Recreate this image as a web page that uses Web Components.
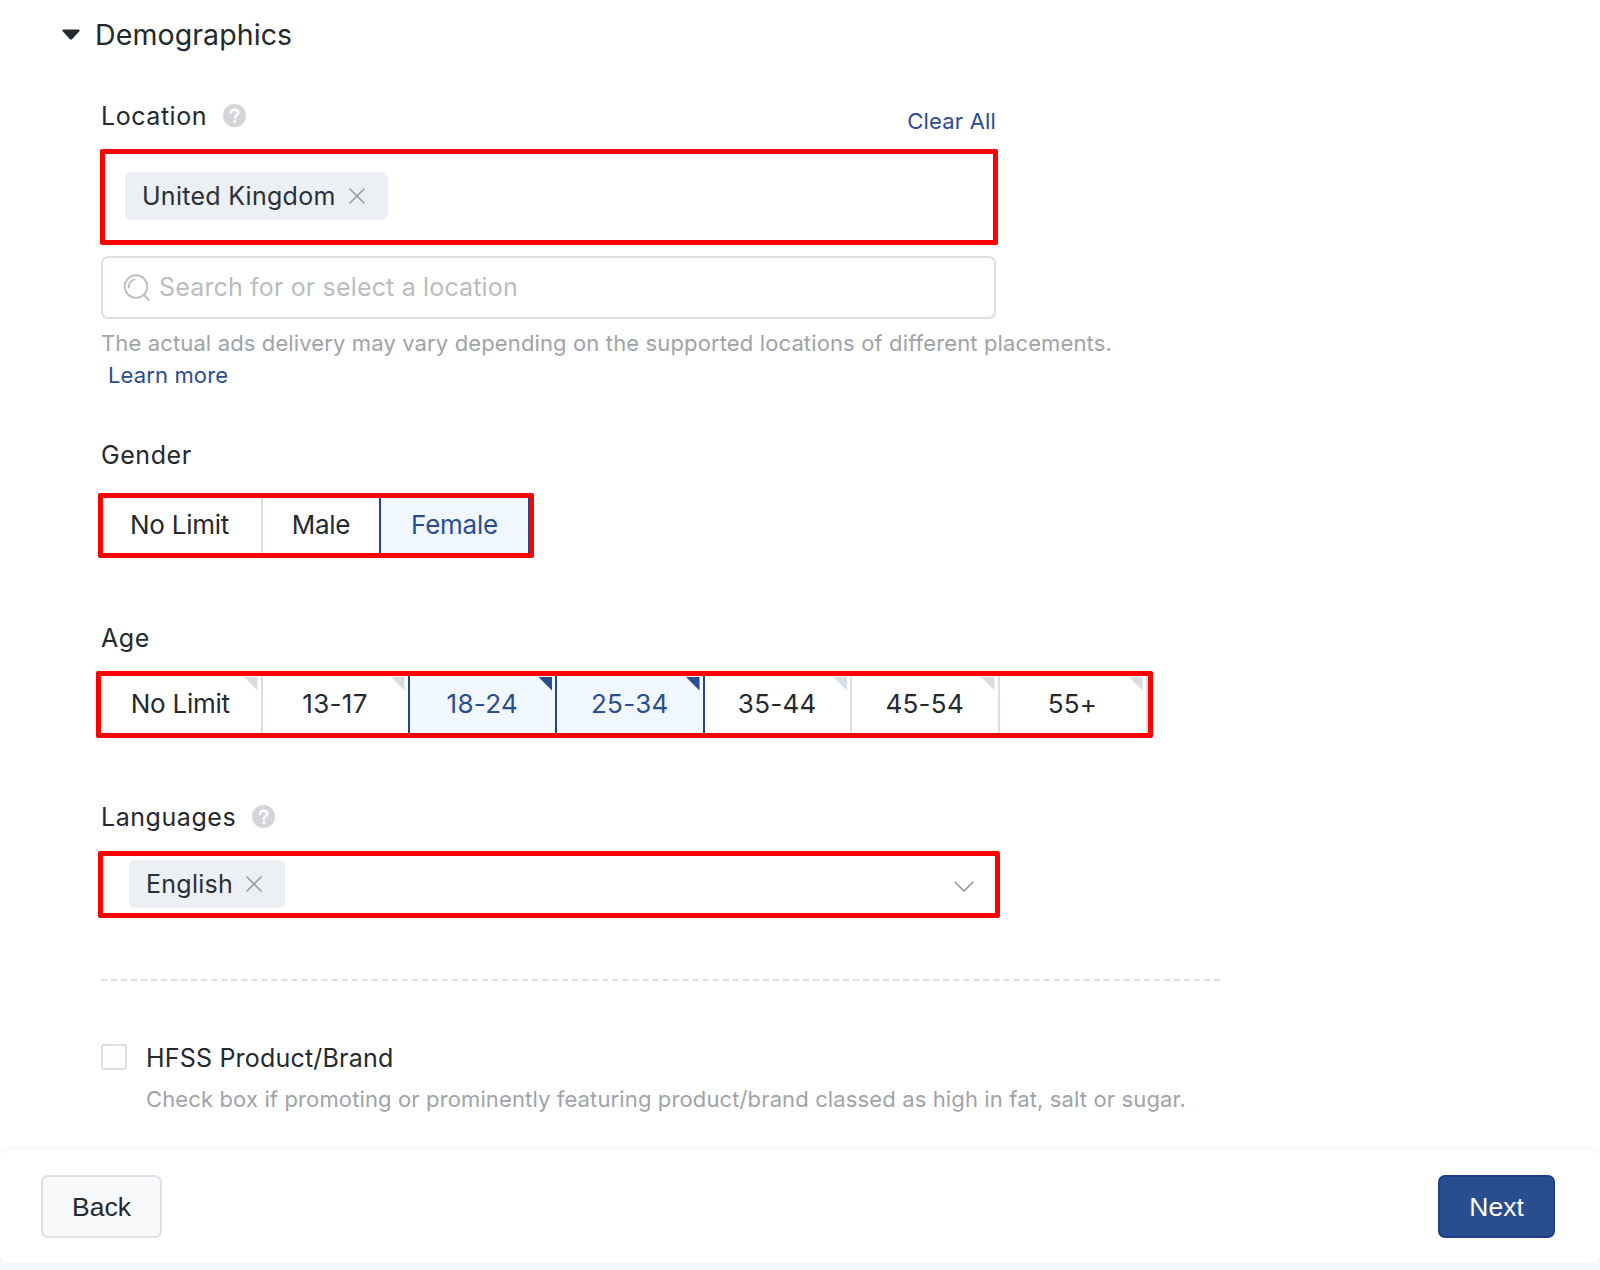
<!DOCTYPE html>
<html lang="en">
<head>
<meta charset="utf-8">
<title>Demographics</title>
<style>
html,body{margin:0;padding:0;}
html{background:#fff;}
body{width:1600px;height:1270px;overflow:hidden;font-family:Inter,"Liberation Sans",sans-serif;color:#24292e;}
</style>
</head>
<body>
<demo-page>
  <demo-section>Demographics</demo-section>
  <field-label help style="margin-top:49px;height:45px" action="Clear All">Location</field-label>
  <red-box style="width:898px;height:96px;margin-left:-1px">
    <chip-tag style="margin:18px 0 0 20px">United Kingdom</chip-tag>
  </red-box>
  <search-box style="margin-top:11px">Search for or select a location</search-box>
  <help-note style="margin-top:8px" link="Learn more">The actual ads delivery may vary depending on the supported locations of different placements.</help-note>
  <field-label style="margin-top:52px;height:50px">Gender</field-label>
  <red-box style="width:436px;height:65px;margin-left:-3px">
    <seg-group cols="158px 118px 150px">
      <seg-item first word style="padding-right:5px">No Limit</seg-item><seg-item word>Male</seg-item><seg-item selected last word>Female</seg-item>
    </seg-group>
  </red-box>
  <field-label style="margin-top:68px;height:44.5px">Age</field-label>
  <red-box style="width:1057px;height:67px;margin-left:-5px">
    <seg-group cols="159.500px 147px 147.500px 147.500px 147.500px 147.500px 150px">
      <seg-item first corner word style="padding-right:1px">No Limit</seg-item><seg-item corner>13-17</seg-item><seg-item corner selected>18-24</seg-item><seg-item corner selected>25-34</seg-item><seg-item corner afterselected>35-44</seg-item><seg-item corner>45-54</seg-item><seg-item corner last>55+</seg-item>
    </seg-group>
  </red-box>
  <field-label help style="margin-top:67.5px;height:46px">Languages</field-label>
  <red-box style="width:902px;height:67px;margin-left:-3px">
    <lang-select><chip-tag>English</chip-tag></lang-select>
  </red-box>
  <dash-rule></dash-rule>
  <check-row note="Check box if promoting or prominently featuring product/brand classed as high in fat, salt or sugar.">HFSS Product/Brand</check-row>
  <page-footer>
    <action-button>Back</action-button>
    <action-button primary>Next</action-button>
  </page-footer>
</demo-page>
<script>
function def(name, css, html, init){
  customElements.define(name, class extends HTMLElement{
    constructor(){super();const r=this.attachShadow({mode:'open'});r.innerHTML='<style>'+css+'</style>'+html;}
    connectedCallback(){ if(init) init.call(this,this.shadowRoot); }
  });
}
const HELP='<svg width="23" height="23" viewBox="0 0 23 23" aria-hidden="true"><circle cx="11.5" cy="11.5" r="11.500" fill="#d3d5d8"/><path d="M7.900 9c.2-2.100 1.800-3.300 3.700-3.300 2.100 0 3.600 1.200 3.600 3 0 2.500-3.300 2.700-3.300 5.300" fill="none" stroke="#fff" stroke-width="2.400" stroke-linecap="round"/><circle cx="11.900" cy="17.500" r="1.500" fill="#fff"/></svg>';

def('demo-page',':host{display:flex;flex-direction:column;width:1600px;height:1270px;padding-left:101px;box-sizing:border-box;font-family:Inter,"Liberation Sans",sans-serif;}','<slot></slot>');

def('demo-section',':host{display:flex;align-items:center;gap:15px;height:40px;margin:15px 0 0 -39px;font-size:28.500px;color:#24292e;letter-spacing:.1px;} svg{display:block;margin-top:-2px} span{display:block;margin-top:-2px}',
 '<svg width="18" height="11" viewBox="0 0 18 11" aria-hidden="true"><path d="M1.500.5h15c1 0 1.500 1 .9 1.800L10 10.200c-.5.6-1.500.6-2 0L.6 2.300C0 1.500.5.5 1.500.5z" fill="#24292e"/></svg><span><slot></slot></span>');

def('field-label',':host{display:flex;align-items:flex-start;font-size:25px;line-height:24px;color:#24292e;width:895px;letter-spacing:.55px;} #h{margin-left:15.500px;height:23px;display:block} #h:empty{display:none} #a{margin-left:auto;color:#2a4d8f;font-size:22px;margin-top:5px;letter-spacing:.17px}',
 '<slot></slot><span id="h"></span><span id="a"></span>',
 function(r){ if(this.hasAttribute('help')) r.getElementById('h').innerHTML=HELP; if(this.getAttribute('action')) r.getElementById('a').textContent=this.getAttribute('action'); });

def('red-box',':host{display:block;box-sizing:border-box;border:5px solid #fe0000;border-radius:2px;background:#fff;}','<slot></slot>');

def('chip-tag',':host{display:inline-flex;align-items:center;gap:12px;height:48px;box-sizing:border-box;padding:0 22px 0 17px;background:#eceff4;border-radius:6px;font-size:25px;color:#2b3036;letter-spacing:.27px;} svg{display:block;margin-top:-1px}',
 '<slot></slot><svg width="18" height="18" viewBox="0 0 18 18" aria-hidden="true"><path d="M1.500 1.500l15 15M16.500 1.500l-15 15" stroke="#9b9ea3" stroke-width="1.700" fill="none"/></svg>');

def('search-box',':host{display:flex;align-items:center;gap:9px;box-sizing:border-box;width:895px;height:63px;border:2px solid #d9dfe5;border-radius:7px;padding-left:20px;font-size:25px;color:#b9bcc0;letter-spacing:.16px;} svg{display:block} span{display:block;margin-top:-1px}',
 '<svg width="27" height="27" viewBox="0 0 27 27" aria-hidden="true"><circle cx="13" cy="12.500" r="11.300" fill="none" stroke="#bcbfc3" stroke-width="1.900"/><path d="M5.800 13.500A7.500 7.500 0 0 1 11.500 5.300" fill="none" stroke="#bcbfc3" stroke-width="1.900" stroke-linecap="round"/><path d="M21.300 21l4.400 5" fill="none" stroke="#bcbfc3" stroke-width="1.900" stroke-linecap="round"/></svg><span><slot></slot></span>');

def('help-note',':host{display:block;font-size:22px;line-height:32px;color:#a0a3a7;letter-spacing:.13px;width:1100px;} a{display:block;color:#2a4d8f;margin-left:7px;text-decoration:none}',
 '<slot></slot><a id="l"></a>',
 function(r){ r.getElementById('l').textContent=this.getAttribute('link'); });

def('seg-group',':host{display:grid;height:100%;}','<slot></slot>',
 function(){ this.style.gridTemplateColumns=this.getAttribute('cols'); });

def('seg-item',':host{display:flex;align-items:center;justify-content:center;position:relative;box-sizing:border-box;border-left:2px solid #d9dfe5;padding-bottom:2px;font-size:26px;color:#24292e;letter-spacing:.3px;background:#fff;} :host([word]){letter-spacing:-.25px} :host([first]){border-left:0} :host([selected]){background:#f0f7fe;color:#2a4d8f;border-left-color:#24458c;} :host([afterselected]){border-left-color:#24458c;} :host([last]){border-right:2px solid #d9dfe5;} :host([last][selected]){border-right:1px solid #24458c;} i{display:none;position:absolute;top:1px;right:3px;width:14px;height:14px;background:#d8dde3;clip-path:polygon(0 0,100% 0,100% 100%);} :host([corner]) i{display:block} :host([selected]) i{background:#2a4d8f}',
 '<slot></slot><i></i>');

def('lang-select',':host{display:flex;align-items:center;justify-content:space-between;height:100%;padding:0 21px 0 26px;box-sizing:border-box;} ::slotted(chip-tag){margin-bottom:1px} svg{display:block;margin-top:4px}',
 '<slot></slot><svg width="20" height="11" viewBox="0 0 20 11" aria-hidden="true"><path d="M.7.7L10 10 19.300.7" fill="none" stroke="#909397" stroke-width="1.500"/></svg>');

def('dash-rule',':host{display:block;width:1119px;margin-top:61px;height:0;border-top:2px dashed #dbdfe3;}','');

def('check-row',':host{display:grid;grid-template-columns:26px 1fr;column-gap:19px;margin-top:63px;font-size:25px;color:#24292e;letter-spacing:.2px;line-height:26px;} b{display:block;box-sizing:border-box;width:26px;height:26px;border:2px solid #d9dfe5;border-radius:3px;background:#fff;} div{padding-top:1px} small{grid-column:2;display:block;font-size:22px;color:#a0a3a7;letter-spacing:.13px;margin-top:15px;line-height:26px}',
 '<b></b><div><slot></slot></div><small id="n"></small>',
 function(r){ r.getElementById('n').textContent=this.getAttribute('note'); });

def('page-footer',':host{display:block;width:1600px;height:120px;margin:38px 0 0 -101px;background:linear-gradient(#fff 0 50%,#f3f7fb 50%);} div{display:flex;justify-content:space-between;align-items:center;box-sizing:border-box;height:113px;padding:0 45px 0 41px;background:#fff;border-radius:9px;box-shadow:0 -3px 5px rgba(0,0,0,.03);}','<div><slot></slot></div>');

def('action-button',':host{display:flex;align-items:center;justify-content:center;box-sizing:border-box;width:121px;height:63px;padding-top:1px;border:2px solid #dde1e6;border-radius:7px;background:#f7f9fb;color:#24292e;font-family:"Liberation Sans",Inter,sans-serif;font-size:26.500px;} :host([primary]){width:117px;background:#2a4d8f;border-color:#1d3f87;color:#fff;}','<slot></slot>');
</script>
</body>
</html>
